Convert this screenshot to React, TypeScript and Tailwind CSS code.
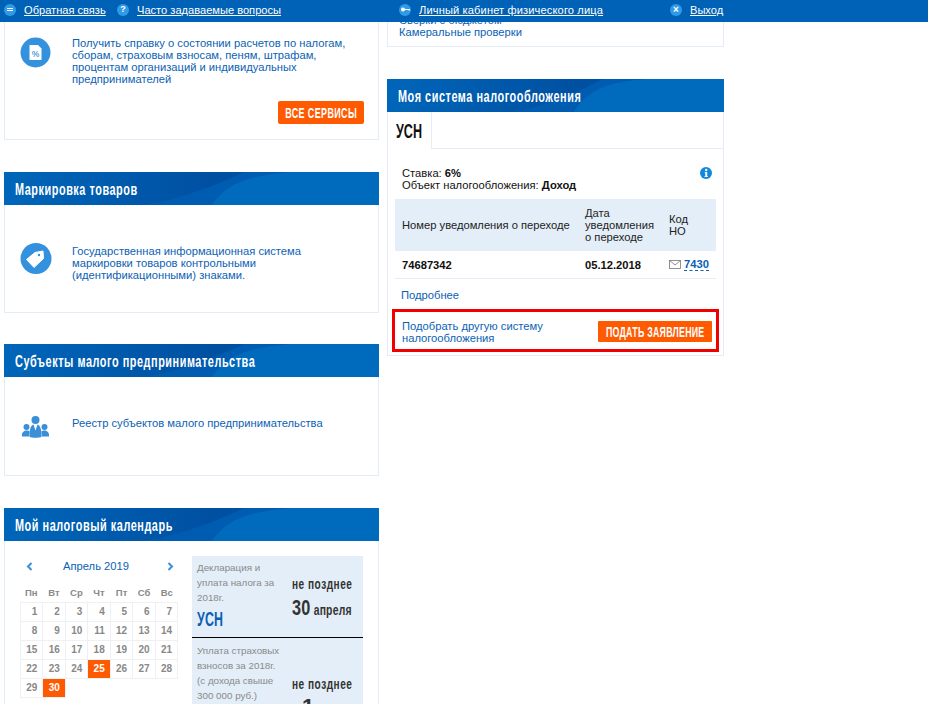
import React from 'react';

const sans = { fontFamily: '"Liberation Sans", Arial, sans-serif' };

const Head = ({ title }: { title: string }) => (
  <div className="relative h-[33px] overflow-hidden bg-gradient-to-r from-[#0066b9] via-[#0050a2] via-55% to-[#0050a2]">
    <svg className="absolute inset-0 h-full w-full" viewBox="0 0 375 33" preserveAspectRatio="none">
      <path d="M140 33C180 26 215 12 240 0H375V33Z" fill="#005cb0" />
      <path d="M208 33C218 18 232 8 262 3C275 1 285 0 292 0H375V33Z" fill="#006bbd" />
    </svg>
    <h2 className="relative pl-[11px] text-[16px] leading-[35px] font-bold tracking-[0.8px] text-white">
      <span className="inline-block origin-left scale-x-[0.68] whitespace-nowrap">{title}</span>
    </h2>
  </div>
);

const TopLink = ({ icon, text, className, textClass = '' }: { icon: React.ReactNode; text: string; className: string; textClass?: string }) => (
  <div className={`flex items-center ${className}`}>
    <span className="flex h-3 w-3 items-center justify-center rounded-full bg-[#2f9be6]">{icon}</span>
    <a className={`ml-[8px] text-[11.1px] text-white underline ${textClass}`}>{text}</a>
  </div>
);

const days = Array.from({ length: 30 }, (_, i) => i + 1);

const Calendar = () => (
  <div className="w-[158px] shrink-0">
    <div className="flex items-center justify-between pt-[3px] pr-[4px] pb-[10px] pl-[6px] text-[#3f8fd8]">
      <svg width="7" height="9" viewBox="0 0 7 9"><path d="M5.5 1 2 4.5 5.5 8" fill="none" stroke="currentColor" strokeWidth="2" /></svg>
      <span className="mr-[8px] text-[11.2px] leading-[14px] text-[#0a62b5]">Апрель 2019</span>
      <svg width="7" height="9" viewBox="0 0 7 9"><path d="M1.5 1 5 4.5 1.5 8" fill="none" stroke="currentColor" strokeWidth="2" /></svg>
    </div>
    <div className="grid grid-cols-7 text-center text-[9.5px] font-bold text-[#8a8a8a]">
      {['Пн', 'Вт', 'Ср', 'Чт', 'Пт', 'Сб', 'Вс'].map((d) => (
        <div key={d} className="h-[19px] leading-[19px]">{d}</div>
      ))}
    </div>
    <div className="grid grid-cols-7 border-t border-l border-[#edf1f5] text-[10px] font-bold text-[#888]">
      {days.map((d) => (
        <div
          key={d}
          className={`h-[19px] border-r border-b border-[#edf1f5] pr-[5px] text-right leading-[18px] ${
            d === 25 || d === 30 ? 'bg-[#ff5a00] text-white' : ''
          }`}
        >
          {d}
        </div>
      ))}
    </div>
  </div>
);

const Deadline = () => (
  <div className="ml-[14px] w-[171px] shrink-0 bg-[#e3eef8] text-[9.8px] leading-[15px] text-[#8a8a8a]">
    <div className="flex h-[82px] border-b border-black pl-[5px]">
      <div className="w-[95px] shrink-0 pt-[4px]">
        <p className="w-[85px]">Декларация и уплата налога за 2018г.</p>
        <p className="text-[20px] leading-[29px] font-bold tracking-[0.3px] text-[#0a5fb4]">
          <span className="inline-block origin-left scale-x-[0.62]">УСН</span>
        </p>
      </div>
      <div className="min-w-0 flex-1 pt-[19px] font-bold text-[#333]">
        <p className="text-[14px] leading-[18px] tracking-[0.7px]">
          <span className="inline-block origin-left scale-x-[0.72] whitespace-nowrap">не позднее</span>
        </p>
        <p className="text-[14px] leading-[30px] tracking-[0.3px]">
          <span className="inline-block origin-left scale-x-[0.74] whitespace-nowrap"><span className="text-[22px]">30</span> апреля</span>
        </p>
      </div>
    </div>
    <div className="flex pl-[5px]">
      <div className="w-[95px] shrink-0 pt-[5px]">
        <p className="w-[85px]">Уплата страховых взносов за 2018г. (с дохода свыше 300 000 руб.)</p>
      </div>
      <div className="min-w-0 flex-1 pt-[37px] font-bold text-[#333]">
        <p className="text-[14px] leading-[18px] tracking-[0.7px]">
          <span className="inline-block origin-left scale-x-[0.72] whitespace-nowrap">не позднее</span>
        </p>
        <p className="pl-[10px] text-[22px] leading-[28px]">1</p>
      </div>
    </div>
  </div>
);

export default function App() {
  return (
    <div className="relative h-[704px] w-[928px] overflow-hidden bg-white text-[11.2px] leading-[12px]" style={sans}>
      <div className="absolute top-0 left-0 z-10 flex h-[22px] w-full items-center bg-[#0062b7] pb-[3px] pl-[4px]">
        <TopLink
          text="Обратная связь"
          className="w-[113px]"
          icon={<span className="h-[3px] w-[6px] border-y border-white" />}
        />
        <TopLink
          text="Часто задаваемые вопросы"
          className="w-[282px]"
          icon={<span className="text-[9px] leading-none font-bold text-white">?</span>}
        />
        <TopLink
          text="Личный кабинет физического лица"
          className="w-[271px]"
          textClass="tracking-[0.13px]"
          icon={<svg width="9" height="5" viewBox="0 0 9 5"><circle cx="2" cy="2.5" r="2" fill="#fff" /><path d="M3 2h6v1.6H7.5V3H3Z" fill="#fff" /></svg>}
        />
        <TopLink
          text="Выход"
          className=""
          icon={<span className="text-[10px] leading-none font-bold text-white">×</span>}
        />
      </div>

      <div className="flex items-start pl-[4px]">
        <div className="w-[375px] shrink-0 pt-[22px]">
          <section className="h-[118px] border-x border-b border-[#e4edf5]">
            <div className="flex pt-[15px] pl-[15px]">
              <svg className="shrink-0" width="31" height="31" viewBox="0 0 31 31">
                <circle cx="15.5" cy="15.5" r="15" fill="#3391de" />
                <path d="M9.5 8H18l3.5 3.5V23h-12Z" fill="#fff" />
                <text x="15.5" y="19.5" textAnchor="middle" fontSize="8.5" fontWeight="700" fill="#5a9fdc" fontFamily="Liberation Sans">%</text>
              </svg>
              <p className="ml-[21px] w-[285px] text-[#0a62b5]">
                Получить справку о состоянии расчетов по налогам, сборам, страховым взносам, пеням, штрафам, процентам организаций и индивидуальных предпринимателей
              </p>
            </div>
            <div className="mt-[16px] flex justify-end pr-[14px]">
              <button className="flex h-[23px] w-[86px] items-center justify-center rounded-[2px] bg-[#ff5a00] text-[14px] font-bold tracking-[0.6px] text-white">
                <span className="inline-block scale-x-[0.64] whitespace-nowrap">ВСЕ СЕРВИСЫ</span>
              </button>
            </div>
          </section>

          <section className="mt-[32px]">
            <Head title="Маркировка товаров" />
            <div className="flex h-[108px] items-center border-x border-b border-[#e4edf5] pl-[15px]">
              <svg className="shrink-0" width="32" height="31" viewBox="0 0 32 31">
                <circle cx="16" cy="15.5" r="15.5" fill="#3391de" />
                <path d="M6.5 16.5 15 9.5l8-1.5.5 7.5-9.5 9Z" fill="#fff" stroke="#fff" strokeLinejoin="round" />
                <circle cx="19" cy="12" r="1.2" fill="#3391de" />
              </svg>
              <p className="mt-[9px] ml-[20px] w-[270px] text-[#0a62b5]">
                Государственная информационная система маркировки товаров контрольными (идентификационными) знаками.
              </p>
            </div>
          </section>

          <section className="mt-[31px]">
            <Head title="Субъекты малого предпринимательства" />
            <div className="flex h-[99px] items-start border-x border-b border-[#e4edf5] pt-[40px] pl-[16px]">
              <svg className="shrink-0 -translate-y-[3px]" width="29" height="24" viewBox="0 0 29 24" fill="#3b8fd8">
                <circle cx="5.5" cy="13" r="3" />
                <circle cx="23.5" cy="13" r="3" />
                <path d="M1 22.5c-.5-3.500 1.500-6 4.500-6 1.500 0 2.500.4 3.200 1L8 22.500ZM28 22.500c.5-3.500-1.500-6-4.500-6-1.500 0-2.500.4-3.200 1l.7 5Z" />
                <circle cx="14.5" cy="6" r="4" />
                <path d="M8.500 23c0-8 1.200-11.500 4-12.500l2 6 2-6c2.800 1 4 4.500 4 12.500-2 1-10 1-12 0Z" />
              </svg>
              <p className="ml-[22px] text-[#0a62b5]">Реестр субъектов малого предпринимательства</p>
            </div>
          </section>

          <section className="mt-[32px]">
            <Head title="Мой налоговый календарь" />
            <div className="flex h-[170px] items-start border-x border-[#e4edf5] pt-[15px] pl-[15px]">
              <Calendar />
              <Deadline />
            </div>
          </section>
        </div>

        <div className="ml-[8px] w-[337px] shrink-0">
          <section className="-mt-[2px] h-[49px] border-x border-b border-[#e4edf5] pt-[16px] pl-[11px] text-[#0a62b5]">
            <p>Сверки с бюджетом</p>
            <p>Камеральные проверки</p>
          </section>

          <section className="mt-[32px]">
            <Head title="Моя система налогообложения" />
            <div className="h-[244px] border-x border-b border-[#e4edf5]">
              <div className="flex h-[37px]">
                <div className="w-[44px] border-r border-[#e4edf5] pl-[8px] text-[20px] leading-[38px] font-bold text-[#111]">
                  <span className="inline-block origin-left scale-x-[0.63]">УСН</span>
                </div>
                <div className="flex-1 border-b border-[#e4edf5]" />
              </div>
              <div className="flex items-start justify-between pt-[18px] pr-[11px] pl-[14px] text-[#111]">
                <div>
                  <p>Ставка: <b>6%</b></p>
                  <p>Объект налогообложения: <b>Доход</b></p>
                </div>
                <svg width="12" height="12" viewBox="0 0 12 12">
                  <circle cx="6" cy="6" r="6" fill="#1089dc" />
                  <circle cx="6.2" cy="3" r="1.2" fill="#fff" />
                  <path d="M4.800 5h2.400v4.200h.8v.9H4.400v-.9h.9V5.900h-.5Z" fill="#fff" />
                </svg>
              </div>
              <div className="mx-[7px] mt-[8px] text-[#222]">
                <div className="flex h-[52px] items-center bg-[#e3eef8]">
                  <div className="w-[190px] pl-[7px]">Номер уведомления о переходе</div>
                  <div className="w-[84px] pr-[8px]">Дата уведомления о переходе</div>
                  <div className="w-[30px]">Код НО</div>
                </div>
                <div className="flex h-[28px] items-center border-b border-[#e4edf5] font-bold text-[#111]">
                  <div className="w-[190px] pl-[7px]">74687342</div>
                  <div className="w-[84px]">05.12.2018</div>
                  <div className="flex items-center">
                    <svg width="12" height="9" viewBox="0 0 12 9" fill="none" stroke="#777" strokeWidth="0.8">
                      <rect x="0.5" y="0.5" width="11" height="8" />
                      <path d="M.5.5 6 5l5.500-4.500" />
                    </svg>
                    <a className="ml-[3px] border-b border-dashed border-[#0a62b5] text-[#0a62b5]">7430</a>
                  </div>
                </div>
              </div>
              <p className="pt-[10px] pl-[13px] text-[#0a62b5]">Подробнее</p>
              <div className="mx-[4px] mt-[8px] flex h-[43px] items-center justify-between border-[3px] border-[#f00000] pt-[2px] pr-[4px] pl-[7px] text-[#0a62b5]">
                <p className="w-[160px]">Подобрать другую систему налогообложения</p>
                <button className="flex h-[21px] w-[114px] items-center justify-center rounded-[1px] bg-[#ff5a00] text-[14px] font-bold tracking-[0.4px] text-white">
                  <span className="inline-block scale-x-[0.63] whitespace-nowrap">ПОДАТЬ ЗАЯВЛЕНИЕ</span>
                </button>
              </div>
            </div>
          </section>
        </div>
      </div>
    </div>
  );
}
